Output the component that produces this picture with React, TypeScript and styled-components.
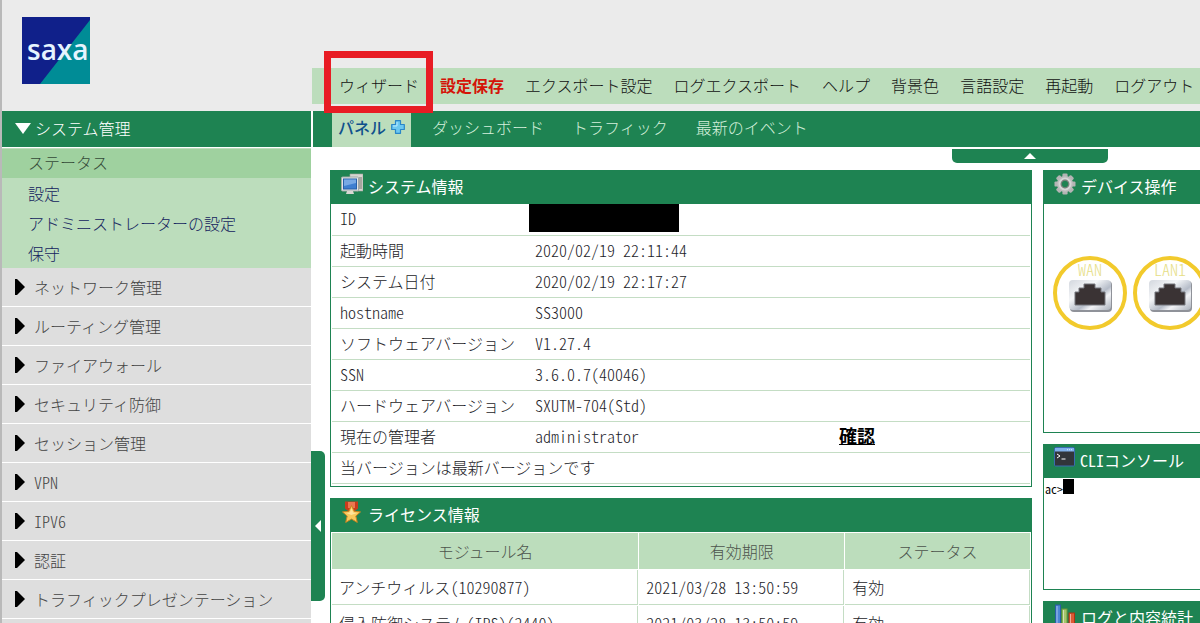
import React from "react";
import styled, { createGlobalStyle, css } from "styled-components";

const color = {
  green: "#1e8352",
  pale: "#bcddbc",
  active: "#9fd19f",
  grey: "#dedede",
  top: "#ebebeb",
  ink: "#1c1c28",
};

const GlobalStyle = createGlobalStyle`
  * { box-sizing: border-box; }
  body {
    margin: 0;
    background: #fff;
    color: ${color.ink};
    font-family: "Noto Sans CJK JP", sans-serif;
    font-size: 16px;
    font-weight: 300;
    line-height: 20px;
  }
  button {
    margin: 0;
    padding: 0;
    border: 0;
    background: none;
    color: inherit;
    font: inherit;
    text-align: left;
    white-space: nowrap;
    cursor: pointer;
  }
  a { color: inherit; text-decoration: none; }
  svg { display: block; flex: none; }
`;

const Page = styled.div`
  display: flex;
  flex-direction: column;
  height: 100vh;
  overflow: hidden;
  border-left: 2px solid #b9b9b9;
`;

const Header = styled.header`
  display: flex;
  flex: none;
  align-items: flex-end;
  height: 111px;
  padding-bottom: 7px;
  background: ${color.top};
`;

const Brand = styled.div`
  flex: none;
  align-self: flex-start;
  width: 310px;
  padding: 17px 20px 0;
`;

const TopMenu = styled.nav`
  display: flex;
  flex: 1;
  gap: 21px;
  min-width: 0;
  height: 36px;
  padding-left: 27px;
  background: ${color.pale};
  color: #111;
`;

const TopItem = styled.button<{ $alert?: boolean }>`
  position: relative;
  flex: none;
  padding-bottom: 2px;
  ${(p) => p.$alert && css`color: #d41408; font-weight: 700;`}
`;

const Marker = styled.span`
  position: absolute;
  inset: -17px -14px -9px -15px;
  z-index: 2;
  border: 7px solid #e81c24;
  pointer-events: none;
`;

const Body = styled.div`
  display: flex;
  flex: 1;
  gap: 2px;
  min-height: 0;
`;

const Sidebar = styled.aside`
  position: relative;
  flex: none;
  width: 309px;
  background: ${color.grey};
`;

const SectionHead = styled.button`
  display: flex;
  align-items: center;
  gap: 4px;
  width: 100%;
  height: 37px;
  padding: 0 0 2px 13px;
  border-bottom: 1px solid #fff;
  background: ${color.green};
  color: #fff;
`;

const SubList = styled.div`
  display: flex;
  flex-direction: column;
  background: ${color.pale};
  color: #14235e;
`;

const SubItem = styled.a<{ $active?: boolean }>`
  height: 30px;
  padding: 5px 0 5px 26px;
  ${(p) => p.$active && css`
    padding-top: 3px;
    border-top: 1px solid ${color.pale};
    background: ${color.active};
    color: #344a38;
  `}
`;

const SectionItem = styled.button`
  display: flex;
  align-items: center;
  gap: 9px;
  width: 100%;
  height: 39px;
  padding: 0 0 1px 13px;
  border-bottom: 1px solid #fff;
  color: #444;
`;

const SideHandle = styled.button`
  position: absolute;
  top: 340px;
  left: 100%;
  z-index: 1;
  display: flex;
  align-items: center;
  justify-content: center;
  width: 14px;
  height: 150px;
  border-radius: 0 5px 5px 0;
  background: ${color.green};
`;

const Main = styled.main`
  position: relative;
  flex: 1;
  min-width: 0;
`;

const TabBar = styled.nav`
  display: flex;
  height: 36px;
  padding-left: 19px;
  background: ${color.green};
  color: #d5f0dc;
`;

const Tab = styled.button<{ $active?: boolean }>`
  display: flex;
  flex: none;
  align-items: center;
  gap: 5px;
  margin-left: 28px;
  padding-bottom: 4px;
  ${(p) => p.$active && css`
    margin: 0 -7px 0 0;
    padding: 0 6px 4px;
    background: ${color.pale};
    color: #10508c;
    font-weight: 500;
  `}
`;

const TopHandle = styled.button`
  position: absolute;
  top: 38px;
  right: 92px;
  display: flex;
  align-items: center;
  justify-content: center;
  width: 156px;
  height: 14px;
  border-radius: 0 0 5px 5px;
  background: ${color.green};
`;

const Dashboard = styled.div`
  display: grid;
  grid-template-columns: minmax(0, 1fr) 157px;
  gap: 11px;
  padding: 23px 0 0 17px;
`;

const Column = styled.div`
  display: flex;
  flex-direction: column;
  gap: 11px;
  min-width: 0;
`;

const Panel = styled.section<{ $wide?: boolean; $height?: number }>`
  display: flex;
  flex-direction: column;
  ${(p) => p.$wide && css`min-width: 320px;`}
  ${(p) => p.$height && css`height: ${p.$height}px;`}
  border: 1px solid ${color.green};
  background: #fff;
`;

const PanelTitle = styled.h2`
  display: flex;
  align-items: center;
  gap: 5px;
  height: 33px;
  margin: 0;
  padding: 0 0 3px 10px;
  background: ${color.green};
  color: #fff;
  font-size: 16px;
  font-weight: 400;
  white-space: nowrap;
  svg { align-self: flex-start; margin-top: 2px; }
`;

const InfoTable = styled.table`
  width: calc(100% - 2px);
  margin: 0 1px 2px;
  border-collapse: collapse;
  table-layout: fixed;
  th, td {
    height: 31px;
    padding: 0 0 3px 8px;
    border-bottom: 1px solid #c4ddc4;
    font-weight: 300;
    text-align: left;
    white-space: nowrap;
  }
`;

const LabelCol = styled.col` width: 195px; `;
const ActionCol = styled.col` width: 199px; `;

const Redacted = styled.span`
  display: block;
  width: 150px;
  height: 28px;
  margin-left: -6px;
  background: #000;
`;

const CheckLink = styled.a`
  color: #000;
  font-size: 18px;
  font-weight: 700;
  text-decoration: underline;
`;

const LicenseTable = styled.table`
  width: 100%;
  border-spacing: 1px;
  table-layout: fixed;
  th {
    height: 36px;
    padding: 0;
    background: ${color.pale};
    color: #4c544c;
    font-weight: 300;
  }
  td {
    height: 35px;
    padding: 0 0 1px 7px;
    border: solid #c4ddc4;
    border-width: 0 1px 1px 0;
    white-space: nowrap;
  }
`;

const NameCol = styled.col` width: 44%; `;
const DateCol = styled.col` width: 205px; `;

/* Latin letters and digits set at half the width of a kana */
const Half = styled.span`
  font-feature-settings: "hwid" 1;
`;

const Ports = styled.div`
  display: flex;
  gap: 6px;
  padding: 52px 0 0 9px;
`;

const Port = styled.button`
  display: flex;
  flex: none;
  flex-direction: column;
  align-items: center;
  width: 74px;
  height: 74px;
  border: 4px solid #f2ca2c;
  border-radius: 50%;
  color: #e6de86;
  line-height: 18px;
`;

const Terminal = styled.div`
  display: flex;
  padding: 1px 0 0 1px;
  color: #000;
  font-size: 12px;
  font-weight: 400;
  line-height: 20px;
`;

const Cursor = styled.span`
  width: 11px;
  height: 15px;
  background: #000;
`;

/* Splits a text so that its ASCII runs are set half width */
const Text = ({ children }: { children: string }) => (
  <span>
    {children.split(/([\x20-\x7e]+)/).map((part, i) =>
      i % 2 ? <Half key={i}>{part}</Half> : part
    )}
  </span>
);

const Triangle = ({ w, h, d, fill }: { w: number; h: number; d: string; fill: string }) => (
  <svg width={w} height={h} viewBox={`0 0 ${w} ${h}`} aria-hidden="true">
    <path d={d} fill={fill} />
  </svg>
);

const Logo = () => (
  <svg width="68" height="67" viewBox="0 0 68 67" role="img" aria-label="saxa">
    <rect width="68" height="67" fill="#10208a" />
    <path d="M68 3V67H18Z" fill="#008c96" />
    <text x="5" y="43" fill="#e6f4ff" fontFamily="Open Sans, sans-serif" fontSize="28" fontWeight="600">saxa</text>
  </svg>
);

const PlusIcon = () => (
  <svg width="14" height="14" viewBox="0 0 14 14" aria-hidden="true">
    <path d="M4.5 .7h5v3.8h3.8v5H9.500v3.800h-5V9.500H.7v-5h3.800Z" fill="#6cc8f0" stroke="#2a86c8" strokeWidth="1.200" strokeLinejoin="round" />
    <path d="M6 2v4H2" fill="none" stroke="#b8ecff" />
  </svg>
);

const ComputerIcon = () => (
  <svg width="22" height="22" viewBox="0 0 22 22" aria-hidden="true">
    <path d="M9 1h13v17h-6V6H9Z" fill="#d6d6d2" stroke="#a5a5a0" strokeWidth=".6" />
    <path d="M18 5h3M18 7h3M18 9h3M18 11h3M18 13h3M18 15h3" stroke="#77776f" />
    <rect x=".5" y="4" width="17" height="14" rx="1" fill="#e3e6e6" stroke="#a0a8a8" />
    <rect x="2.500" y="6" width="13" height="10" fill="#3f7fd0" stroke="#2860a8" />
    <path d="M3 6.500h12V10L3 13Z" fill="#78a9e4" />
    <path d="M6 18h6l1 3H5Z" fill="#d8d8d4" />
  </svg>
);

const MedalIcon = () => (
  <svg width="22" height="22" viewBox="0 0 22 22" aria-hidden="true">
    <path d="M4 .5h13v7l-5 4h-3L4 7.500Z" fill="#c83c1c" />
    <path d="M7 1h7v6H7Z" fill="#ec7650" />
    <path d="M10.500 4.500l2.700 5.800 6.300.6-4.700 4.200 1.500 6.300-5.800-3.300-5.800 3.300 1.500-6.300L1.500 10.900l6.300-.6Z" fill="#f8c95c" stroke="#c9831f" strokeWidth="1" strokeLinejoin="round" />
    <path d="M10.500 7l1.800 4.500 4 .5-6 2-5-2 3.500-.5Z" fill="#ffe49a" />
  </svg>
);

const GearIcon = () => (
  <svg width="22" height="22" viewBox="-11 -11 22 22" aria-hidden="true">
    <g fill="#b4b4b4">
      {[0, 45, 90, 135].map((a) => (
        <rect key={a} x="-2.600" y="-10.500" width="5.200" height="21" rx="1.200" transform={`rotate(${a})`} />
      ))}
      <circle r="8" fill="#bcbcbc" />
    </g>
    <circle r="5.500" fill="none" stroke="#d6d6d6" strokeWidth="2" />
    <circle r="3.800" fill={color.green} stroke="#77807a" strokeWidth="1.200" />
  </svg>
);

const ConsoleIcon = () => (
  <svg width="21" height="20" viewBox="0 0 21 20" aria-hidden="true">
    <rect x=".5" y=".5" width="20" height="18.500" rx="1" fill="#32353a" stroke="#3a6bb0" />
    <rect x="1" y="1" width="19" height="3.500" fill="#7fb0ea" />
    <path d="M13 2.700h5" stroke="#dcebff" strokeDasharray="1 1" />
    <path d="M3 7l3 2-3 2" fill="none" stroke="#fff" />
    <path d="M7.500 12h4" stroke="#fff" />
  </svg>
);

const ChartIcon = () => (
  <svg width="22" height="24" viewBox="0 0 22 24" aria-hidden="true">
    <rect x="1.500" y="1" width="5" height="23" fill="#4c86d4" stroke="#2a5da6" />
    <rect x="8" y="5" width="5" height="19" fill="#a4c66c" stroke="#6c9638" />
    <rect x="15" y="9" width="5.500" height="15" fill="#dc5a34" stroke="#a83414" />
    <path d="M3 2v22M9.500 6v18M16.500 10v14" stroke="#fff" strokeOpacity=".5" />
  </svg>
);

const SocketIcon = () => (
  <svg width="44" height="34" viewBox="0 0 44 34" aria-hidden="true">
    <defs>
      <linearGradient id="metal" x1="0" y1="0" x2="1" y2="1">
        <stop offset="0" stopColor="#d3d7de" />
        <stop offset=".35" stopColor="#f4f6f8" />
        <stop offset=".6" stopColor="#b5bcc8" />
        <stop offset=".72" stopColor="#f2f3f6" />
        <stop offset="1" stopColor="#aab1bc" />
      </linearGradient>
    </defs>
    <rect x="2" y="3" width="42" height="31" rx="4" fill="#8f9299" />
    <rect x="1" y="2" width="42" height="30" rx="4" fill="url(#metal)" />
    <path d="M7 27V14h4v-4h5V6h11v4h6v4h4v13Z" fill="#3a3334" stroke="#74777c" />
  </svg>
);

const topItems = ["ウィザード", "設定保存", "エクスポート設定", "ログエクスポート", "ヘルプ", "背景色", "言語設定", "再起動", "ログアウト"];
const subItems = ["ステータス", "設定", "アドミニストレーターの設定", "保守"];
const sections = ["ネットワーク管理", "ルーティング管理", "ファイアウォール", "セキュリティ防御", "セッション管理", "VPN", "IPV6", "認証", "トラフィックプレゼンテーション"];
const tabs = ["ダッシュボード", "トラフィック", "最新のイベント"];
const info = [
  ["起動時間", "2020/02/19 22:11:44"],
  ["システム日付", "2020/02/19 22:17:27"],
  ["hostname", "SS3000"],
  ["ソフトウェアバージョン", "V1.27.4"],
  ["SSN", "3.6.0.7(40046)"],
  ["ハードウェアバージョン", "SXUTM-704(Std)"],
];
const licenses = [
  ["アンチウィルス(10290877)", "2021/03/28 13:50:59", "有効"],
  ["侵入防御システム(IPS)(2440)", "2021/03/28 13:50:59", "有効"],
];

export default function App() {
  return (
    <>
      <GlobalStyle />
      <Page>
        <Header>
          <Brand><Logo /></Brand>
          <TopMenu>
            {topItems.map((label, i) => (
              <TopItem key={label} $alert={i === 1}>
                {label}
                {i === 0 && <Marker />}
              </TopItem>
            ))}
          </TopMenu>
        </Header>
        <Body>
          <Sidebar>
            <SectionHead>
              <Triangle w={16} h={11} d="M0 0H16L8 11Z" fill="#fff" />
              システム管理
            </SectionHead>
            <SubList>
              {subItems.map((label, i) => (
                <SubItem key={label} href="#" $active={i === 0}>{label}</SubItem>
              ))}
            </SubList>
            {sections.map((label) => (
              <SectionItem key={label}>
                <Triangle w={10} h={16} d="M0 0H2L10 8L2 16H0Z" fill="#000" />
                <Text>{label}</Text>
              </SectionItem>
            ))}
            <SideHandle aria-label="メニューを隠す">
              <Triangle w={6} h={12} d="M6 0V12L0 6Z" fill="#fff" />
            </SideHandle>
          </Sidebar>
          <Main>
            <TabBar>
              <Tab $active>パネル<PlusIcon /></Tab>
              {tabs.map((label) => <Tab key={label}>{label}</Tab>)}
            </TabBar>
            <TopHandle aria-label="ヘッダーを隠す">
              <Triangle w={12} h={6} d="M6 0L12 6H0Z" fill="#fff" />
            </TopHandle>
            <Dashboard>
              <Column>
                <Panel>
                  <PanelTitle><ComputerIcon />システム情報</PanelTitle>
                  <InfoTable>
                    <colgroup><LabelCol /><col /><ActionCol /></colgroup>
                    <tbody>
                      <tr>
                        <th scope="row"><Text>ID</Text></th>
                        <td colSpan={2}><Redacted /></td>
                      </tr>
                      {info.map(([name, value]) => (
                        <tr key={name}>
                          <th scope="row"><Text>{name}</Text></th>
                          <td colSpan={2}><Text>{value}</Text></td>
                        </tr>
                      ))}
                      <tr>
                        <th scope="row">現在の管理者</th>
                        <td><Text>administrator</Text></td>
                        <td><CheckLink href="#">確認</CheckLink></td>
                      </tr>
                      <tr><td colSpan={3}>当バージョンは最新バージョンです</td></tr>
                    </tbody>
                  </InfoTable>
                </Panel>
                <Panel>
                  <PanelTitle><MedalIcon />ライセンス情報</PanelTitle>
                  <LicenseTable>
                    <colgroup><NameCol /><DateCol /><col /></colgroup>
                    <thead>
                      <tr><th>モジュール名</th><th>有効期限</th><th>ステータス</th></tr>
                    </thead>
                    <tbody>
                      {licenses.map((row) => (
                        <tr key={row[0]}>
                          {row.map((cell) => <td key={cell}><Text>{cell}</Text></td>)}
                        </tr>
                      ))}
                    </tbody>
                  </LicenseTable>
                </Panel>
              </Column>
              <Column>
                <Panel $wide $height={263}>
                  <PanelTitle><GearIcon />デバイス操作</PanelTitle>
                  <Ports>
                    {["WAN", "LAN1"].map((port) => (
                      <Port key={port}><Text>{port}</Text><SocketIcon /></Port>
                    ))}
                  </Ports>
                </Panel>
                <Panel $wide $height={146}>
                  <PanelTitle><ConsoleIcon /><Text>CLIコンソール</Text></PanelTitle>
                  <Terminal><Half>ac&gt;</Half><Cursor /></Terminal>
                </Panel>
                <Panel $wide $height={263}>
                  <PanelTitle><ChartIcon />ログと内容統計</PanelTitle>
                </Panel>
              </Column>
            </Dashboard>
          </Main>
        </Body>
      </Page>
    </>
  );
}
